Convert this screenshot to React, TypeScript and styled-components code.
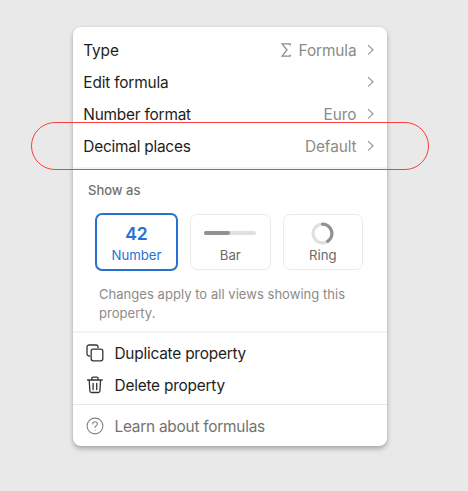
import React from "react";
import styled, { createGlobalStyle } from "styled-components";

const GlobalStyle = createGlobalStyle`
  body { margin: 0; background: #e9e9e9; }
  * { box-sizing: border-box; }
`;

const Page = styled.main`
  position: relative;
  width: 468px;
  height: 491px;
  padding: 27px 0 0 73px;
  overflow: hidden;
  background: #e9e9e9;
  font-family: Inter, "Liberation Sans", sans-serif;
  color: #1e1e1b;
`;

const Menu = styled.section`
  display: flex;
  flex-direction: column;
  width: 314px;
  height: 419px;
  padding-top: 7px;
  border-radius: 8px;
  background: #fff;
  box-shadow: 0 3px 5px rgba(0, 0, 0, 0.26), 0 0 3px rgba(0, 0, 0, 0.07);
`;

const Row = styled.div`
  display: flex;
  align-items: center;
  height: 32px;
  padding: 0 12.5px 0 10.3px;
`;

const Text = styled.span<{ $tracking?: number; $muted?: boolean }>`
  padding-top: 2px;
  font-size: 15.4px;
  line-height: 20px;
  white-space: nowrap;
  letter-spacing: ${(p) => p.$tracking ?? 0}px;
  color: ${(p) => (p.$muted ? "#8c8b88" : "inherit")};
`;

const Value = styled.span`
  display: flex;
  align-items: center;
  gap: 8px;
  margin-left: auto;
`;

const Chevron = styled.svg`
  width: 8px;
  height: 12px;
  margin-left: 10px;
  overflow: visible;
`;

const Divider = styled.div<{ $height: number; $color: string }>`
  flex: none;
  height: ${(p) => p.$height}px;
  background: ${(p) => p.$color};
`;

const DisplaySection = styled.div`
  height: 163px;
  padding: 12px 0 0 15px;
`;

const Heading = styled.h2`
  margin: 0;
  font-size: 13px;
  font-weight: 500;
  line-height: 18px;
  letter-spacing: 0;
  color: #73726e;
`;

const Tiles = styled.div`
  display: flex;
  align-items: center;
  gap: 12px;
  height: 58px;
  margin: 14px 0 0 7px;
`;

const Tile = styled.div<{ $selected?: boolean }>`
  display: flex;
  flex-direction: column;
  align-items: center;
  width: ${(p) => (p.$selected ? 83 : 80.5)}px;
  height: ${(p) => (p.$selected ? 58 : 56)}px;
  padding-top: 7px;
  border: ${(p) => (p.$selected ? "2px solid #2871d3" : "1px solid #ebebeb")};
  border-radius: 7px;
  color: ${(p) => (p.$selected ? "#2871d3" : "#6b6a66")};
`;

const Preview = styled.div`
  display: flex;
  align-items: center;
  justify-content: center;
  height: 23px;
  font-size: 17.5px;
  font-weight: 600;
`;

const TileLabel = styled.span`
  font-size: 13.2px;
  line-height: 20px;
`;

const Bar = styled.div`
  width: 52px;
  height: 4px;
  border-radius: 2px;
  background: #e0e0df;
`;

const BarFill = styled.div`
  width: 26px;
  height: 4px;
  border-radius: 2px;
  background: #929190;
`;

const Note = styled.p`
  margin: 14px 0 0 11px;
  font-size: 13px;
  line-height: 19.5px;
  letter-spacing: 0.04px;
  color: #8c8b88;
  white-space: nowrap;
`;

const Actions = styled.div`
  height: 71px;
  padding-top: 4px;
`;

const ActionRow = styled(Row)`
  gap: 9.5px;
`;

const HelpRow = styled(ActionRow)`
  height: 41px;
  color: #73726e;
`;

const Icon = styled.svg`
  flex: none;
  width: 20px;
  height: 20px;
  margin-left: 1.7px;
  overflow: visible;
  fill: none;
  stroke: #35342f;
  stroke-width: 1.3;
  stroke-linecap: round;
  stroke-linejoin: round;
`;

const HelpIcon = styled(Icon)`
  stroke: #85847f;
  stroke-width: 1.1;
`;

const Highlight = styled.div`
  position: absolute;
  left: 31px;
  top: 122px;
  width: 398px;
  height: 48px;
  border: 1px solid #fa3d3e;
  border-radius: 24px;
  pointer-events: none;
`;

const Sigma = () => (
  <svg width="10" height="14" viewBox="0 0 10 14">
    <path d="M9.2 2.6V.8H1L6 7 1 13.2h8.2v-1.8" fill="none" stroke="#8c8b88" strokeWidth="1.3" />
  </svg>
);

const settings = [
  { label: "Type", value: "Formula", tracking: -0.15, valueTracking: -0.1, sigma: true },
  { label: "Edit formula", value: "", tracking: -0.17, valueTracking: 0 },
  { label: "Number format", value: "Euro", tracking: -0.21, valueTracking: 0 },
  { label: "Decimal places", value: "Default", tracking: -0.23, valueTracking: -0.1 },
];

export default function App() {
  return (
    <>
      <GlobalStyle />
      <Page>
        <Menu>
          {settings.map((s) => (
            <Row key={s.label}>
              <Text $tracking={s.tracking}>{s.label}</Text>
              <Value>
                {s.sigma && <Sigma />}
                {s.value && <Text $muted $tracking={s.valueTracking}>{s.value}</Text>}
              </Value>
              <Chevron viewBox="0 0 8 12">
                <path d="M1.1 1.200 6 5.800 1.100 10.400" fill="none" stroke="#8f8e8b" strokeWidth="1.1" />
              </Chevron>
            </Row>
          ))}
          <Divider $height={5} $color="#fff" />
          <Divider $height={2} $color="#f3f3f3" />
          <DisplaySection>
            <Heading>Show as</Heading>
            <Tiles>
              <Tile $selected>
                <Preview>42</Preview>
                <TileLabel>Number</TileLabel>
              </Tile>
              <Tile>
                <Preview><Bar><BarFill /></Bar></Preview>
                <TileLabel>Bar</TileLabel>
              </Tile>
              <Tile>
                <Preview>
                  <svg width="23" height="23" viewBox="0 0 23 23" fill="none" strokeWidth="3.2" strokeLinecap="round">
                    <circle cx="11.5" cy="11.5" r="9.4" stroke="#e0e0df" />
                    <path d="M11.5 2.1a9.4 9.4 0 0 1 5.2 17.2" stroke="#929190" />
                  </svg>
                </Preview>
                <TileLabel>Ring</TileLabel>
              </Tile>
            </Tiles>
            <Note>Changes apply to all views showing this<br />property.</Note>
          </DisplaySection>
          <Divider $height={2} $color="#f3f3f3" />
          <Actions>
            <ActionRow>
              <Icon viewBox="0 0 20 20">
                <path d="M4.7 13H4a2 2 0 0 1-2-2V4a2 2 0 0 1 2-2h7a2 2 0 0 1 2 2v.7" />
                <rect x="6.2" y="6.2" width="11.6" height="11.6" rx="2" />
              </Icon>
              <Text $tracking={-0.22}>Duplicate property</Text>
            </ActionRow>
            <ActionRow>
              <Icon viewBox="0 0 20 20">
                <path d="M2.6 5h14.6M6.8 5V3.4q0-1.3 1.3-1.3h3.6Q13 2.1 13 3.4V5M4.2 5l.7 11q.1 1.5 1.6 1.5h6.8q1.5 0 1.6-1.5l.7-11M8.1 8.3v6.2M11.7 8.3v6.2" />
              </Icon>
              <Text $tracking={-0.21}>Delete property</Text>
            </ActionRow>
          </Actions>
          <Divider $height={1} $color="#e9e9e9" />
          <HelpRow>
            <HelpIcon viewBox="0 0 20 20">
              <circle cx="10" cy="10" r="7.9" />
              <path d="M7.7 8q0-2.2 2.3-2.2T12.3 8q0 1-1.2 1.700T10 11.500M10 14v.1" />
            </HelpIcon>
            <Text $tracking={-0.24}>Learn about formulas</Text>
          </HelpRow>
        </Menu>
        <Highlight />
      </Page>
    </>
  );
}
